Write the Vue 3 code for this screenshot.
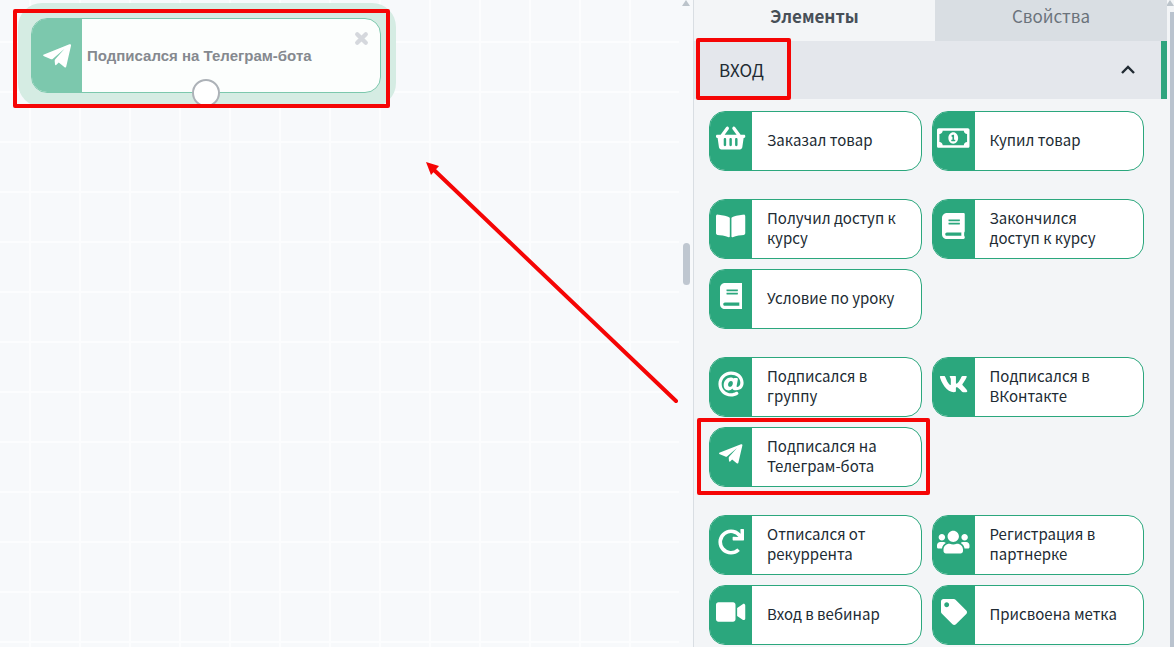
<script setup>
import { ref } from 'vue'

const icons = {
  basket: { box: '0 0 576 512', d: 'M576 216v16c0 13.255-10.745 24-24 24h-8l-26.113 182.788C514.509 462.435 494.257 480 470.37 480H105.63c-23.887 0-44.139-17.565-47.518-41.212L32 256h-8c-13.255 0-24-10.745-24-24v-16c0-13.255 10.745-24 24-24h67.341l106.78-146.821c10.395-14.292 30.407-17.453 44.701-7.058 14.293 10.395 17.453 30.408 7.058 44.701L170.477 192h235.046L326.12 82.821c-10.395-14.292-7.234-34.306 7.059-44.701 14.291-10.395 34.306-7.235 44.701 7.058L484.659 192H552c13.255 0 24 10.745 24 24zM312 392V280c0-13.255-10.745-24-24-24s-24 10.745-24 24v112c0 13.255 10.745 24 24 24s24-10.745 24-24zm112 0V280c0-13.255-10.745-24-24-24s-24 10.745-24 24v112c0 13.255 10.745 24 24 24s24-10.745 24-24zm-224 0V280c0-13.255-10.745-24-24-24s-24 10.745-24 24v112c0 13.255 10.745 24 24 24s24-10.745 24-24z' },
  money: { box: '0 0 640 512', d: 'M608 64H32C14.33 64 0 78.33 0 96v320c0 17.67 14.33 32 32 32h576c17.67 0 32-14.33 32-32V96c0-17.67-14.33-32-32-32zM592 336c-35.35 0-64 28.65-64 64H112c0-35.35-28.65-64-64-64V176c35.35 0 64-28.65 64-64h416c0 35.35 28.65 64 64 64v160zM320 144c-53 0-96 50.14-96 112s43 112 96 112 96-50.14 96-112-43-112-96-112zM352 320h-64c-4.42 0-8-3.58-8-8v-16c0-4.42 3.58-8 8-8h16v-55.44l-.47.31a7.994 7.994 0 0 1-11.09-2.22l-8.88-13.31a7.994 7.994 0 0 1 2.22-11.09l15.33-10.22A24 24 0 0 1 314.42 192H328c4.42 0 8 3.58 8 8v88h16c4.42 0 8 3.58 8 8v16c0 4.42-3.58 8-8 8z' },
  bookOpen: { box: '0 0 576 512', d: 'M542.22 32.05c-54.8 3.11-163.72 14.43-230.96 55.59-4.64 2.84-7.27 7.89-7.27 13.17v363.87c0 11.55 12.63 18.85 23.28 13.49 69.18-34.82 169.23-44.32 218.7-46.92 16.89-.89 30.02-14.43 30.02-30.66V62.75c.01-17.71-15.35-31.74-33.77-30.7zM264.73 87.64C197.5 46.48 88.58 35.17 33.78 32.05 15.36 31.01 0 45.04 0 62.75V400.6c0 16.24 13.13 29.78 30.02 30.66 49.49 2.6 149.59 12.11 218.77 46.95 10.62 5.35 23.21-1.94 23.21-13.46V100.63c0-5.29-2.62-10.14-7.27-12.99z' },
  book: { box: '0 0 448 512', d: 'M448 360V24c0-13.3-10.7-24-24-24H96C43 0 0 43 0 96v320c0 53 43 96 96 96h328c13.3 0 24-10.7 24-24v-16c0-7.5-3.5-14.3-8.9-18.7-4.2-15.4-4.2-59.3 0-74.7 5.4-4.3 8.9-11.1 8.9-18.6zM128 134c0-3.3 2.7-6 6-6h212c3.3 0 6 2.7 6 6v20c0 3.3-2.7 6-6 6H134c-3.3 0-6-2.7-6-6v-20zm0 64c0-3.3 2.7-6 6-6h212c3.3 0 6 2.7 6 6v20c0 3.3-2.7 6-6 6H134c-3.3 0-6-2.7-6-6v-20zm253.4 250H96c-17.7 0-32-14.3-32-32 0-17.6 14.4-32 32-32h285.4c-1.9 17.1-1.9 46.9 0 64z' },
  at: { box: '0 0 512 512', d: 'M256 8C118.941 8 8 118.919 8 256c0 137.059 110.919 248 248 248 48.154 0 95.342-14.14 135.408-40.223 12.005-7.815 14.625-24.288 5.552-35.372l-10.177-12.433c-7.671-9.371-21.179-11.667-31.373-5.129C325.92 429.757 291.314 440 256 440c-101.458 0-184-82.542-184-184S154.542 72 256 72c100.139 0 184 57.619 184 160 0 38.786-21.093 79.742-58.17 83.693-17.349-.454-16.91-12.857-13.476-30.024l23.433-121.11C394.653 149.75 383.308 136 368.225 136h-44.981a13.518 13.518 0 0 0-13.432 11.993l-.01.092c-14.697-17.901-40.448-21.775-59.971-21.775-74.58 0-137.831 62.234-137.831 151.46 0 65.303 36.785 105.87 96 105.87 26.984 0 57.369-15.637 74.991-38.333 9.522 34.104 40.613 34.103 70.71 34.103C462.609 379.41 504 307.798 504 232 504 95.653 394.023 8 256 8zm-21.68 304.43c-22.249 0-36.07-15.623-36.07-40.771 0-44.993 30.779-72.729 58.63-72.729 22.292 0 35.601 15.241 35.601 40.77 0 45.061-33.875 72.73-58.161 72.73z' },
  vk: { box: '0 0 576 512', d: 'M545 117.7c3.7-12.5 0-21.7-17.8-21.7h-58.9c-15 0-21.9 7.9-25.6 16.7 0 0-30 73.1-72.4 120.5-13.7 13.7-20 18.1-27.5 18.1-3.7 0-9.4-4.4-9.4-16.9V117.7c0-15-4.2-21.7-16.6-21.7h-92.6c-9.4 0-15 7-15 13.5 0 14.2 21.2 17.5 23.4 57.5v86.8c0 19-3.4 22.5-10.9 22.5-20 0-68.6-73.4-97.4-157.4-5.8-16.3-11.5-22.9-26.6-22.9H38.8c-16.8 0-20.2 7.9-20.2 16.7 0 15.6 20 93.1 93.1 195.5C160.4 378.1 229 416 291.4 416c37.5 0 42.1-8.4 42.1-22.9 0-66.8-3.4-73.1 15.4-73.1 8.7 0 23.7 4.4 58.7 38.1 40 40 46.6 57.9 69 57.9h58.9c16.8 0 25.3-8.4 20.4-25-11.2-34.9-86.9-106.7-90.3-111.5-8.7-11.2-6.2-16.2 0-26.2.1-.1 72-101.3 79.4-135.6z' },
  plane: { box: '0 0 82 70', d: 'M1 31Q-1 34 3 36L22 44Q26 46 29 43L63 14L37 43Q34 46 34 49L35 59Q36 64 40 60L46 54L62 67Q67 71 68 65L82 4Q82 -1 77 1Z' },
  redo: { box: '0 0 512 512', d: 'M500.33 0h-47.41a12 12 0 0 0-12 12.57l4 82.76A247.42 247.42 0 0 0 256 8C119.34 8 7.9 119.53 8 256.19 8.1 393.07 119.1 504 256 504a247.1 247.1 0 0 0 166.18-63.91 12 12 0 0 0 .48-17.43l-34-34a12 12 0 0 0-16.38-.55A176 176 0 1 1 402.1 157.8l-101.53-4.87a12 12 0 0 0-12.57 12v47.41a12 12 0 0 0 12 12h200.33a12 12 0 0 0 12-12V12a12 12 0 0 0-12-12z' },
  users: { box: '0 0 640 512', d: 'M96 224c35.3 0 64-28.7 64-64s-28.7-64-64-64-64 28.7-64 64 28.7 64 64 64zm448 0c35.3 0 64-28.7 64-64s-28.7-64-64-64-64 28.7-64 64 28.7 64 64 64zm32 32h-64c-17.6 0-33.5 7.1-45.1 18.6 40.3 22.1 68.9 62 75.1 109.4h66c17.7 0 32-14.3 32-32v-32c0-35.3-28.7-64-64-64zm-256 0c61.9 0 112-50.1 112-112S381.9 32 320 32 208 82.1 208 144s50.1 112 112 112zm76.8 32h-8.3c-20.8 10-43.9 16-68.5 16s-47.6-6-68.5-16h-8.3C179.6 288 128 339.6 128 403.2V432c0 26.5 21.5 48 48 48h288c26.5 0 48-21.5 48-48v-28.8c0-63.6-51.6-115.2-115.2-115.2zm-223.7-13.4C161.5 263.1 145.6 256 128 256H64c-35.3 0-64 28.7-64 64v32c0 17.7 14.3 32 32 32h65.9c6.3-47.4 34.9-87.3 75.2-109.4z' },
  video: { box: '0 0 576 512', d: 'M336.2 64H47.8C21.4 64 0 85.4 0 111.8v288.4C0 426.6 21.4 448 47.8 448h288.4c26.4 0 47.8-21.4 47.8-47.8V111.8c0-26.4-21.4-47.8-47.8-47.8zm189.4 37.7L416 177.3v157.4l109.6 75.5c21.2 14.6 50.4-.3 50.4-25.8V127.5c0-25.4-29.1-40.4-50.4-25.8z' },
  tag: { box: '0 0 512 512', d: 'M0 252.118V48C0 21.49 21.49 0 48 0h204.118a48 48 0 0 1 33.941 14.059l211.882 211.882c18.745 18.745 18.745 49.137 0 67.882L293.823 497.941c-18.745 18.745-49.137 18.745-67.882 0L14.059 286.059A48 48 0 0 1 0 252.118zM112 64c-26.51 0-48 21.49-48 48s21.49 48 48 48 48-21.49 48-48-21.49-48-48-48z' }
}

const groups = [
  [
    { icon: 'basket', label: 'Заказал товар' },
    { icon: 'money', label: 'Купил товар' }
  ],
  [
    { icon: 'bookOpen', label: 'Получил доступ к курсу' },
    { icon: 'book', label: 'Закончился доступ к курсу' },
    { icon: 'book', label: 'Условие по уроку' }
  ],
  [
    { icon: 'at', label: 'Подписался в группу' },
    { icon: 'vk', label: 'Подписался в ВКонтакте' },
    { icon: 'plane', label: 'Подписался на Телеграм-бота', marked: true }
  ],
  [
    { icon: 'redo', label: 'Отписался от рекуррента' },
    { icon: 'users', label: 'Регистрация в партнерке' },
    { icon: 'video', label: 'Вход в вебинар' },
    { icon: 'tag', label: 'Присвоена метка' }
  ]
]

const open = ref(true)
</script>

<template>
  <div class="app">
    <main class="canvas">
      <div class="grid"></div>
      <div class="node">
        <div class="node-card">
          <span class="node-icon">
            <svg :viewBox="icons.plane.box" aria-hidden="true"><path :d="icons.plane.d" /></svg>
          </span>
          <span class="node-title">Подписался на Телеграм-бота</span>
          <button class="node-close" type="button" aria-label="Удалить">
            <svg viewBox="0 0 14 14" aria-hidden="true"><path d="M3 3l8 8M11 3L3 11" /></svg>
          </button>
        </div>
        <span class="port"></span>
      </div>
      <div class="mark node-mark"></div>
      <svg class="arrow" viewBox="0 0 260 250" aria-hidden="true">
        <path class="arrow-line" d="M8 8L251 240" />
        <path class="arrow-head" d="M1 1L14 5L6 14Z" />
      </svg>
      <div class="scroll">
        <span class="scroll-up"></span>
        <span class="scroll-thumb"></span>
      </div>
    </main>

    <aside class="side">
      <nav class="tabs">
        <button class="tab active" type="button">Элементы</button>
        <button class="tab" type="button">Свойства</button>
      </nav>
      <button class="section" type="button" :aria-expanded="open" @click="open = !open">
        <span class="section-title">ВХОД</span>
        <svg class="chevron" viewBox="0 0 16 10" aria-hidden="true"><path d="M2 8l6-6 6 6" /></svg>
        <span class="mark section-mark"></span>
      </button>
      <div v-if="open" class="groups">
        <div v-for="(group, g) in groups" :key="g" class="group">
          <button v-for="item in group" :key="item.label" class="card" type="button">
            <span class="card-icon" :class="item.icon">
              <svg :viewBox="icons[item.icon].box" aria-hidden="true"><path fill-rule="evenodd" :d="icons[item.icon].d" /></svg>
            </span>
            <span class="card-label">{{ item.label }}</span>
            <span v-if="item.marked" class="mark card-mark"></span>
          </button>
        </div>
      </div>
    </aside>

    <div class="page-scroll">
      <span class="scroll-up"></span>
      <span class="page-thumb"></span>
    </div>
  </div>
</template>

<style>
body {
  margin: 0;
}
</style>

<style scoped>
.app {
  display: grid;
  grid-template-columns: minmax(0, 1fr) 474px 7px;
  height: 100vh;
  overflow: hidden;
  background: #f3f5f7;
  color: #212b33;
  font-family: "Noto Sans CJK SC", "Noto Sans", sans-serif;
  font-size: 15px;
}
button {
  margin: 0;
  padding: 0;
  border: 0;
  background: none;
  color: inherit;
  font: inherit;
  text-align: left;
  cursor: pointer;
}
.canvas {
  position: relative;
  display: flex;
  overflow: hidden;
  background: #f7f9fb;
}
.grid {
  flex: 1;
  background-image:
    linear-gradient(to right, #fcfdfe 2px, transparent 2px),
    linear-gradient(to bottom, #fcfdfe 2px, transparent 2px);
  background-size: 50px 50px;
  background-position: 29px 41px;
}
.scroll {
  display: flex;
  flex-direction: column;
  align-items: center;
  width: 14px;
}
.scroll-up {
  border: solid transparent;
  border-width: 0 4px 6px;
  border-bottom-color: #bcc4cb;
}
.scroll-thumb {
  width: 7px;
  height: 42px;
  margin-top: 237px;
  border-radius: 4px;
  background: #bfc7d0;
}
.node {
  position: absolute;
  left: 18px;
  top: 3px;
  box-sizing: border-box;
  width: 378px;
  height: 104px;
  padding: 15px 15px 14px 13px;
  border-radius: 24px;
  background: #d5ece3;
}
.node-card {
  display: flex;
  align-items: center;
  box-sizing: border-box;
  height: 75px;
  border: 1px solid #7cc8ad;
  border-radius: 16px;
  overflow: hidden;
  background: #fcfefd;
}
.node-icon {
  display: flex;
  align-items: center;
  justify-content: center;
  width: 50px;
  height: 100%;
  background: #7cc8ad;
}
.node-icon svg {
  height: 24px;
  fill: #fff;
}
.node-title {
  flex: 1;
  padding-left: 5px;
  color: #85898f;
  font-family: "Liberation Sans", Arial, sans-serif;
  font-size: 15px;
  font-weight: 700;
}
.node-close {
  align-self: flex-start;
  margin: 12px 11px 0 0;
}
.node-close svg {
  display: block;
  width: 15px;
  fill: none;
  stroke: #d5d8dd;
  stroke-width: 4;
  stroke-linecap: round;
}
.port {
  position: absolute;
  left: 174px;
  top: 76px;
  box-sizing: border-box;
  width: 28px;
  height: 28px;
  border: 2px solid #adb2b8;
  border-radius: 50%;
  background: #fff;
}
.mark {
  position: absolute;
  box-sizing: border-box;
  border: 4px solid #f50505;
  border-radius: 2px;
  pointer-events: none;
}
.node-mark {
  left: 13px;
  top: 9px;
  width: 377px;
  height: 99px;
}
.arrow {
  position: absolute;
  left: 425px;
  top: 161px;
  width: 260px;
  height: 250px;
}
.arrow-line {
  fill: none;
  stroke: #f50505;
  stroke-width: 4;
  stroke-linecap: round;
}
.arrow-head {
  fill: #f50505;
}
.side {
  border-left: 1px solid #d9dee3;
}
.tabs {
  display: grid;
  grid-template-columns: 241fr 232fr;
}
.tab {
  height: 41px;
  padding-bottom: 10px;
  background: #d9dee3;
  color: #6b737b;
  font-size: 17px;
  text-align: center;
}
.tab.active {
  background: #f3f5f7;
  color: #474f57;
  font-weight: 700;
}
.section {
  position: relative;
  display: flex;
  align-items: center;
  justify-content: space-between;
  box-sizing: border-box;
  width: 100%;
  height: 58px;
  padding: 0 25px;
  border-right: 6px solid #2fa57e;
  background: #e4e7ec;
  font-size: 17px;
}
.section-title {
  padding-bottom: 2px;
}
.section-mark {
  left: 2px;
  top: -3px;
  width: 95px;
  height: 62px;
}
.chevron {
  width: 16px;
  fill: none;
  stroke: #212b33;
  stroke-width: 2.4;
}
.groups {
  display: flex;
  flex-direction: column;
  gap: 28px;
  padding: 12px 23px 12px 15px;
}
.group {
  display: grid;
  grid-template-columns: 1fr 1fr;
  gap: 10px;
}
.card {
  position: relative;
  display: flex;
  align-items: stretch;
  box-sizing: border-box;
  height: 60px;
  border: 1px solid #2ba77d;
  border-radius: 16px;
  background: #fff;
}
.card-icon {
  display: flex;
  flex: none;
  align-items: center;
  justify-content: center;
  box-sizing: border-box;
  width: 42px;
  padding-bottom: 6px;
  border-radius: 15px 0 0 15px;
  background: #2ba77d;
}
.card-icon svg {
  height: 26px;
  fill: #fff;
}
.card-icon.plane svg {
  height: 20px;
}
.card-label {
  align-self: center;
  padding: 0 15px 2px;
  line-height: 20px;
}
.card-mark {
  left: -13px;
  top: -10px;
  width: 233px;
  height: 77px;
}
.page-scroll {
  display: flex;
  flex-direction: column;
  align-items: flex-end;
  overflow: hidden;
}
.page-thumb {
  flex: 1;
  width: 4px;
  margin-top: 6px;
  background: #bac3ce;
}
</style>
